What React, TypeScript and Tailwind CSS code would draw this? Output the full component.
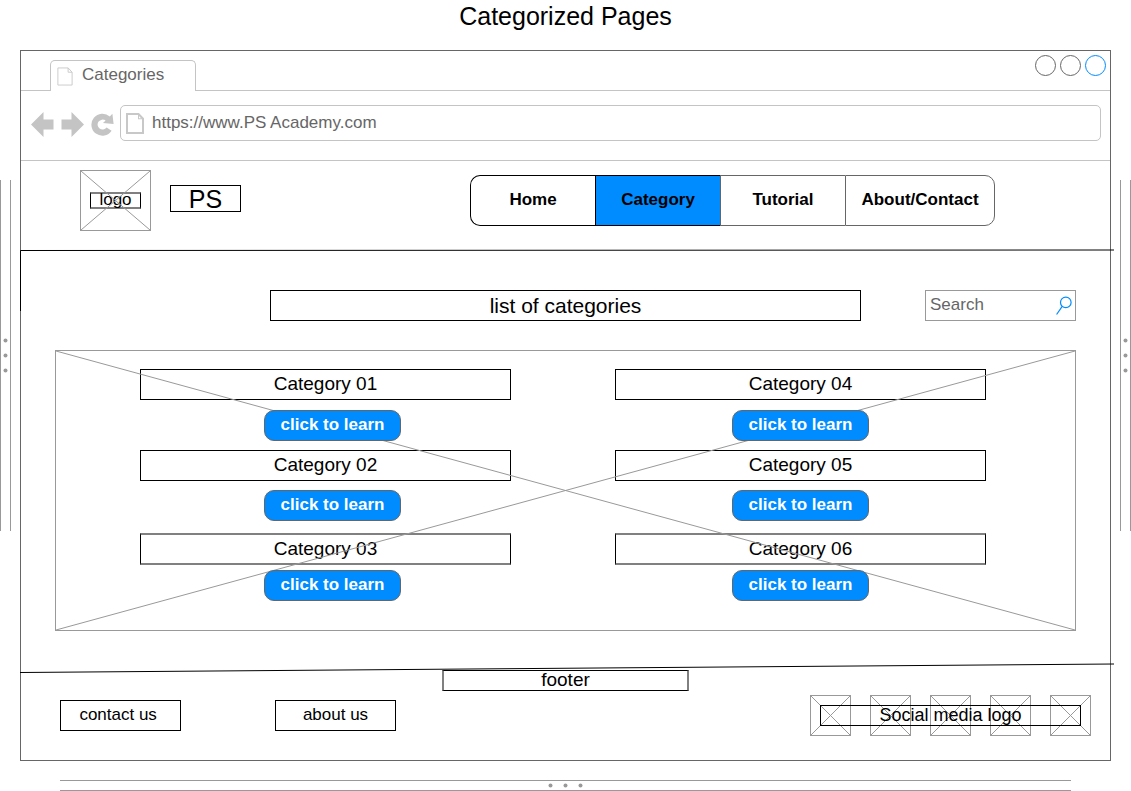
import type { ReactNode } from "react";

function Cross() {
  return (
    <svg className="pointer-events-none absolute inset-0 h-full w-full" aria-hidden="true">
      <line x1="0" y1="0" x2="100%" y2="100%" stroke="#999" />
      <line x1="0" y1="100%" x2="100%" y2="0" stroke="#999" />
    </svg>
  );
}

function Dots({ vertical = false }: { vertical?: boolean }) {
  return (
    <svg
      className={vertical ? "h-[35px] w-[5px]" : "h-[35px] w-[5px] rotate-90"}
      viewBox="0 0 5 35"
      fill="#999"
      aria-hidden="true"
    >
      <circle cx="2.5" cy="2.5" r="2" />
      <circle cx="2.5" cy="17.5" r="2" />
      <circle cx="2.5" cy="32.5" r="2" />
    </svg>
  );
}

function SideSplitter() {
  return (
    <div className="mt-[130px] flex h-[351px] w-[11px] shrink-0 items-center justify-center border-x border-[#999]">
      <Dots vertical />
    </div>
  );
}

function PageIcon({ className, strokeWidth }: { className: string; strokeWidth: number }) {
  return (
    <svg className={className} viewBox="0 0 18 20" fill="none" stroke="#c8c8c8" strokeWidth={strokeWidth} preserveAspectRatio="none" aria-hidden="true">
      <path d="M1 1H12.5L17 5.5V19H1Z" />
      <path d="M12.5 1V5.5H17" strokeWidth="1" />
    </svg>
  );
}

const rowGap = {
  wide: "flex flex-col gap-[10px]",
  normal: "flex flex-col gap-[9px]",
  tight: "flex flex-col gap-[5px] pt-[3px]",
};

function Category({ name, row, shift = false }: { name: string; row: keyof typeof rowGap; shift?: boolean }) {
  return (
    <div className={rowGap[row]}>
      <h2
        className={
          row === "tight"
            ? "flex h-8 items-center justify-center border border-y-2 border-black border-y-[#808080] text-[19px] leading-[22px]"
            : "flex h-[31px] items-center justify-center border border-black pb-[2px] text-[19px] leading-[22px]"
        }
      >
        {name}
      </h2>
      <div className={shift ? "flex justify-center pl-[14px]" : "flex justify-center"}>
        <button
          type="button"
          className="relative z-10 h-[31px] w-[137px] rounded-[10px] border border-[#666] bg-[#008cff] pb-[2px] text-[17px] leading-5 font-bold text-white"
        >
          click to learn
        </button>
      </div>
    </div>
  );
}

function FooterLink({ children }: { children: ReactNode }) {
  return (
    <a href="#" className="flex h-[31px] w-[121px] items-center justify-center border border-black pb-[2px] text-[17px] leading-5">
      {children}
    </a>
  );
}

export default function App() {
  return (
    <div className="bg-white font-['Liberation_Sans',Arial,sans-serif] text-black">
      <h1 className="h-[50px] pt-[2px] text-center text-[25px] leading-[29px]">Categorized Pages</h1>

      <div className="flex gap-[9px]">
        <SideSplitter />

        <div className="relative min-w-0 flex-1 border border-[#666]">
          <div className="flex h-10 justify-between border-b border-[#c4c4c4] pr-1 pl-[29px]">
            <div className="mt-[9px] -mb-px flex w-[146px] rounded-t-[5px] border border-b-0 border-[#c4c4c4] bg-white pl-[6px]">
              <PageIcon className="mt-[6px] h-[19px] w-4" strokeWidth={1} />
              <span className="pt-1 pl-[9px] text-[17px] leading-5 text-[#666]">Categories</span>
            </div>
            <div className="flex gap-1 pt-1">
              <button type="button" aria-label="Minimize" className="size-[21px] rounded-full border border-[#666]" />
              <button type="button" aria-label="Maximize" className="size-[21px] rounded-full border border-[#666]" />
              <button type="button" aria-label="Close" className="size-[21px] rounded-full border border-[#008cff]" />
            </div>
          </div>

          <div className="flex h-[70px] border-b border-[#c4c4c4] pt-[14px] pr-[9px] pl-[10px]">
            <svg className="mt-[6px] h-[26px] w-[84px]" viewBox="31 111 84 26" fill="#c4c4c4" role="img" aria-label="Back, forward, reload">
              <path d="M31 124.5L43.5 112V119.5H53.5V129.5H43.5V137Z" />
              <path d="M84 124.5L71.5 112V119.5H61.5V129.5H71.5V137Z" />
              <path d="M109.8 116.6L112.4 113.8L113.6 124L103 123L105.6 120.6A5 5 0 1 0 106.6 127.6L111.6 130.8A11 11 0 1 1 109.8 116.6Z" />
            </svg>
            <div className="ml-[5px] flex h-9 min-w-0 flex-1 items-center rounded-[5px] border border-[#c4c4c4] pl-[5px]">
              <PageIcon className="h-[21px] w-[18px]" strokeWidth={2} />
              <input
                aria-label="Address"
                defaultValue="https://www.PS Academy.com"
                className="min-w-0 flex-1 bg-transparent pl-2 text-[17px] leading-5 text-[#666] outline-none"
              />
            </div>
          </div>

          <header className="flex h-[90px] items-start pt-[9px] pr-[115px] pl-[59px]">
            <div className="relative flex h-[61px] w-[71px] items-center justify-center border border-[#999]">
              <Cross />
              <span className="flex h-[17px] w-[51px] items-center justify-center border border-y-2 border-black border-y-[#808080] pb-[2px] text-[17px] leading-5">
                logo
              </span>
            </div>
            <div className="mt-[15px] ml-[19px] flex h-[27px] w-[71px] items-center justify-center border border-black pt-[2px] text-[25px] leading-[29px]">
              PS
            </div>
            <nav className="mt-[5px] ml-auto flex h-[51px] text-[17px] leading-5 font-bold">
              <a href="#" className="flex w-[125px] items-center justify-center rounded-l-[10px] border border-r-0 border-black pb-[2px]">Home</a>
              <a href="#" className="flex w-[125px] items-center justify-center border border-r-0 border-black bg-[#008cff] pb-[2px]">Category</a>
              <a href="#" className="flex w-[125px] items-center justify-center border border-r-0 border-[#666] pb-[2px]">Tutorial</a>
              <a href="#" className="flex w-[150px] items-center justify-center rounded-r-[10px] border border-[#666] pb-[2px]">About/Contact</a>
            </nav>
            <svg className="pointer-events-none absolute top-[198px] -left-px h-[63px] w-[calc(100%+5px)]" viewBox="0 0 1094 63" preserveAspectRatio="none" fill="none" stroke="#000" aria-hidden="true">
              <path d="M0.5 62V1.5L1094 1" />
            </svg>
          </header>

          <div className="flex gap-16 pt-[39px] pr-[34px] pl-[249px]">
            <div className="flex h-[31px] min-w-0 flex-1 items-center justify-center border border-black text-[21px] leading-6">
              list of categories
            </div>
            <div className="flex h-[31px] w-[151px] items-center border border-[#999] pr-[3px] pl-1">
              <input
                type="text"
                aria-label="Search"
                placeholder="Search"
                className="min-w-0 flex-1 bg-transparent pb-[2px] text-[17px] leading-5 outline-none placeholder:text-[#666] placeholder:opacity-100"
              />
              <svg className="h-[19px] w-4" viewBox="0 0 16 19" fill="none" stroke="#008cff" strokeWidth="1.2" aria-hidden="true">
                <circle cx="9.8" cy="6.4" r="5.3" />
                <path d="M6.2 10.4L0.6 18.5" />
              </svg>
            </div>
          </div>

          <main className="relative mx-[34px] mt-[29px] flex h-[281px] gap-[104px] border border-[#999] pt-[18px] pr-[89px] pl-[84px]">
            <section className="flex flex-1 flex-col gap-[9px]">
              <Category name="Category 01" row="wide" shift />
              <Category name="Category 02" row="normal" shift />
              <Category name="Category 03" row="tight" shift />
            </section>
            <section className="flex flex-1 flex-col gap-[9px]">
              <Category name="Category 04" row="wide" />
              <Category name="Category 05" row="normal" />
              <Category name="Category 06" row="tight" />
            </section>
            <Cross />
          </main>

          <footer className="pt-[39px] pb-6">
            <div className="mx-auto flex h-[21px] w-[247px] items-center justify-center border border-x-2 border-black border-x-[#808080] pb-[2px] text-[19px] leading-[22px]">
              footer
            </div>
            <div className="mt-1 flex items-center pr-[19px] pl-[39px]">
              <div className="flex gap-[94px]">
                <FooterLink>contact us{"\u00a0"}</FooterLink>
                <FooterLink>about us</FooterLink>
              </div>
              <div className="relative ml-auto flex gap-[19px]">
                {[0, 1, 2, 3, 4].map((n) => (
                  <div key={n} className="relative size-[41px] border border-[#999]">
                    <Cross />
                  </div>
                ))}
                <div className="absolute inset-x-[10px] inset-y-[10px] flex items-center justify-center border border-black pb-[2px] text-[18px] leading-5">
                  Social media logo
                </div>
              </div>
            </div>
            <svg className="pointer-events-none absolute bottom-[87px] -left-px h-[10px] w-[calc(100%+5px)]" viewBox="0 0 1094 10" preserveAspectRatio="none" stroke="#000" aria-hidden="true">
              <line x1="0" y1="9.5" x2="1094" y2="1" />
            </svg>
          </footer>
        </div>

        <SideSplitter />
      </div>

      <div className="mx-[60px] mt-[19px] flex h-[11px] items-center justify-center border-y border-[#999]">
        <div className="flex h-[5px] items-center">
          <Dots />
        </div>
      </div>
    </div>
  );
}
